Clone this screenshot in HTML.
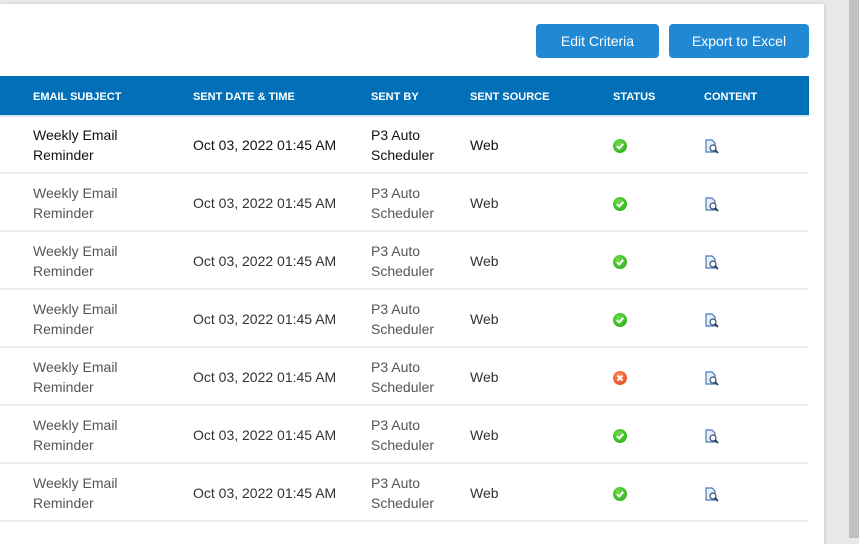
<!DOCTYPE html>
<html><head><style>
body{margin:0;width:859px;height:538px;overflow:hidden;background:#e8e8e8;font-family:"Liberation Sans",sans-serif;position:relative}
.panel{position:absolute;left:0;top:4px;width:824px;height:540px;background:#fff;box-shadow:1px 0 3px rgba(0,0,0,.12)}
.sb{position:absolute;left:849px;top:0;width:10px;height:538px;background:#c1c1c1}
.btn{position:absolute;top:20px;height:34px;background:#2189d4;color:#fff;border-radius:4px;font-size:14px;line-height:34px;text-align:center}
.hdr{position:absolute;left:0;top:72px;width:809px;height:39px;background:#0170b9;border-bottom:2px solid #d7e3ee}
.hdr span{position:absolute;top:15px;color:#fff;font-size:11px;font-weight:bold}
.row{position:absolute;left:0;width:809px;height:56px;border-bottom:2px solid #eef0f3;color:#555;font-size:14px}
.row span{position:absolute;line-height:20px}
.row.first{color:#111}
.ok,.no{position:absolute;left:613px;top:23px;width:14px;height:14px;border-radius:50%}
.ok{background:radial-gradient(circle at 40% 35%,#6fdc4a,#1ea512)}
.no{background:radial-gradient(circle at 40% 35%,#ff8a5a,#e0401a)}
.ok svg,.no svg{position:absolute;left:0;top:0}
.doc{position:absolute;left:704px;top:22px}
</style></head><body>
<div class="panel">
<div class="btn" style="left:536px;width:123px">Edit Criteria</div>
<div class="btn" style="left:669px;width:140px">Export to Excel</div>
<div class="hdr">
<span style="left:33px">EMAIL SUBJECT</span><span style="left:193px">SENT DATE &amp; TIME</span><span style="left:371px">SENT BY</span><span style="left:470px">SENT SOURCE</span><span style="left:613px">STATUS</span><span style="left:704px">CONTENT</span>
</div>
</div>
<div class="sb"></div>
<div id="rows"></div>
<script>
var h='';
for(var i=0;i<7;i++){
var t=116+i*58;var bad=i==4;
h+='<div class="row'+(i==0?' first':'')+'" style="top:'+t+'px">'+
'<span style="left:33px;top:9px">Weekly Email<br>Reminder</span>'+
'<span style="left:193px;top:19px;color:'+(i==0?'#111':'#333')+'">Oct 03, 2022 01:45 AM</span>'+
'<span style="left:371px;top:9px;color:'+(i==0?'#111':'#555')+'">P3 Auto<br>Scheduler</span>'+
'<span style="left:470px;top:19px;color:'+(i==0?'#111':'#333')+'">Web</span>'+
(bad?'<div class="no"><svg width="14" height="14"><path d="M4.5 4.5L9.5 9.5M9.5 4.5L4.5 9.5" stroke="#fff" stroke-width="2"/></svg></div>':
'<div class="ok"><svg width="14" height="14"><path d="M3.8 7.2L6.2 9.4L10.3 4.8" stroke="#fff" stroke-width="2" fill="none"/></svg></div>')+
'<svg class="doc" width="16" height="16"><path d="M2 2h6l3 3v9H2z" fill="#e6eef8" stroke="#4a78b8" stroke-width="1.2"/><circle cx="9" cy="10" r="3" fill="#fff" stroke="#3a4a70" stroke-width="1.2"/><path d="M11 12l3 3" stroke="#1a2a50" stroke-width="1.6"/></svg>'+
'</div>';}
document.getElementById('rows').innerHTML=h;
</script>
</body></html>
